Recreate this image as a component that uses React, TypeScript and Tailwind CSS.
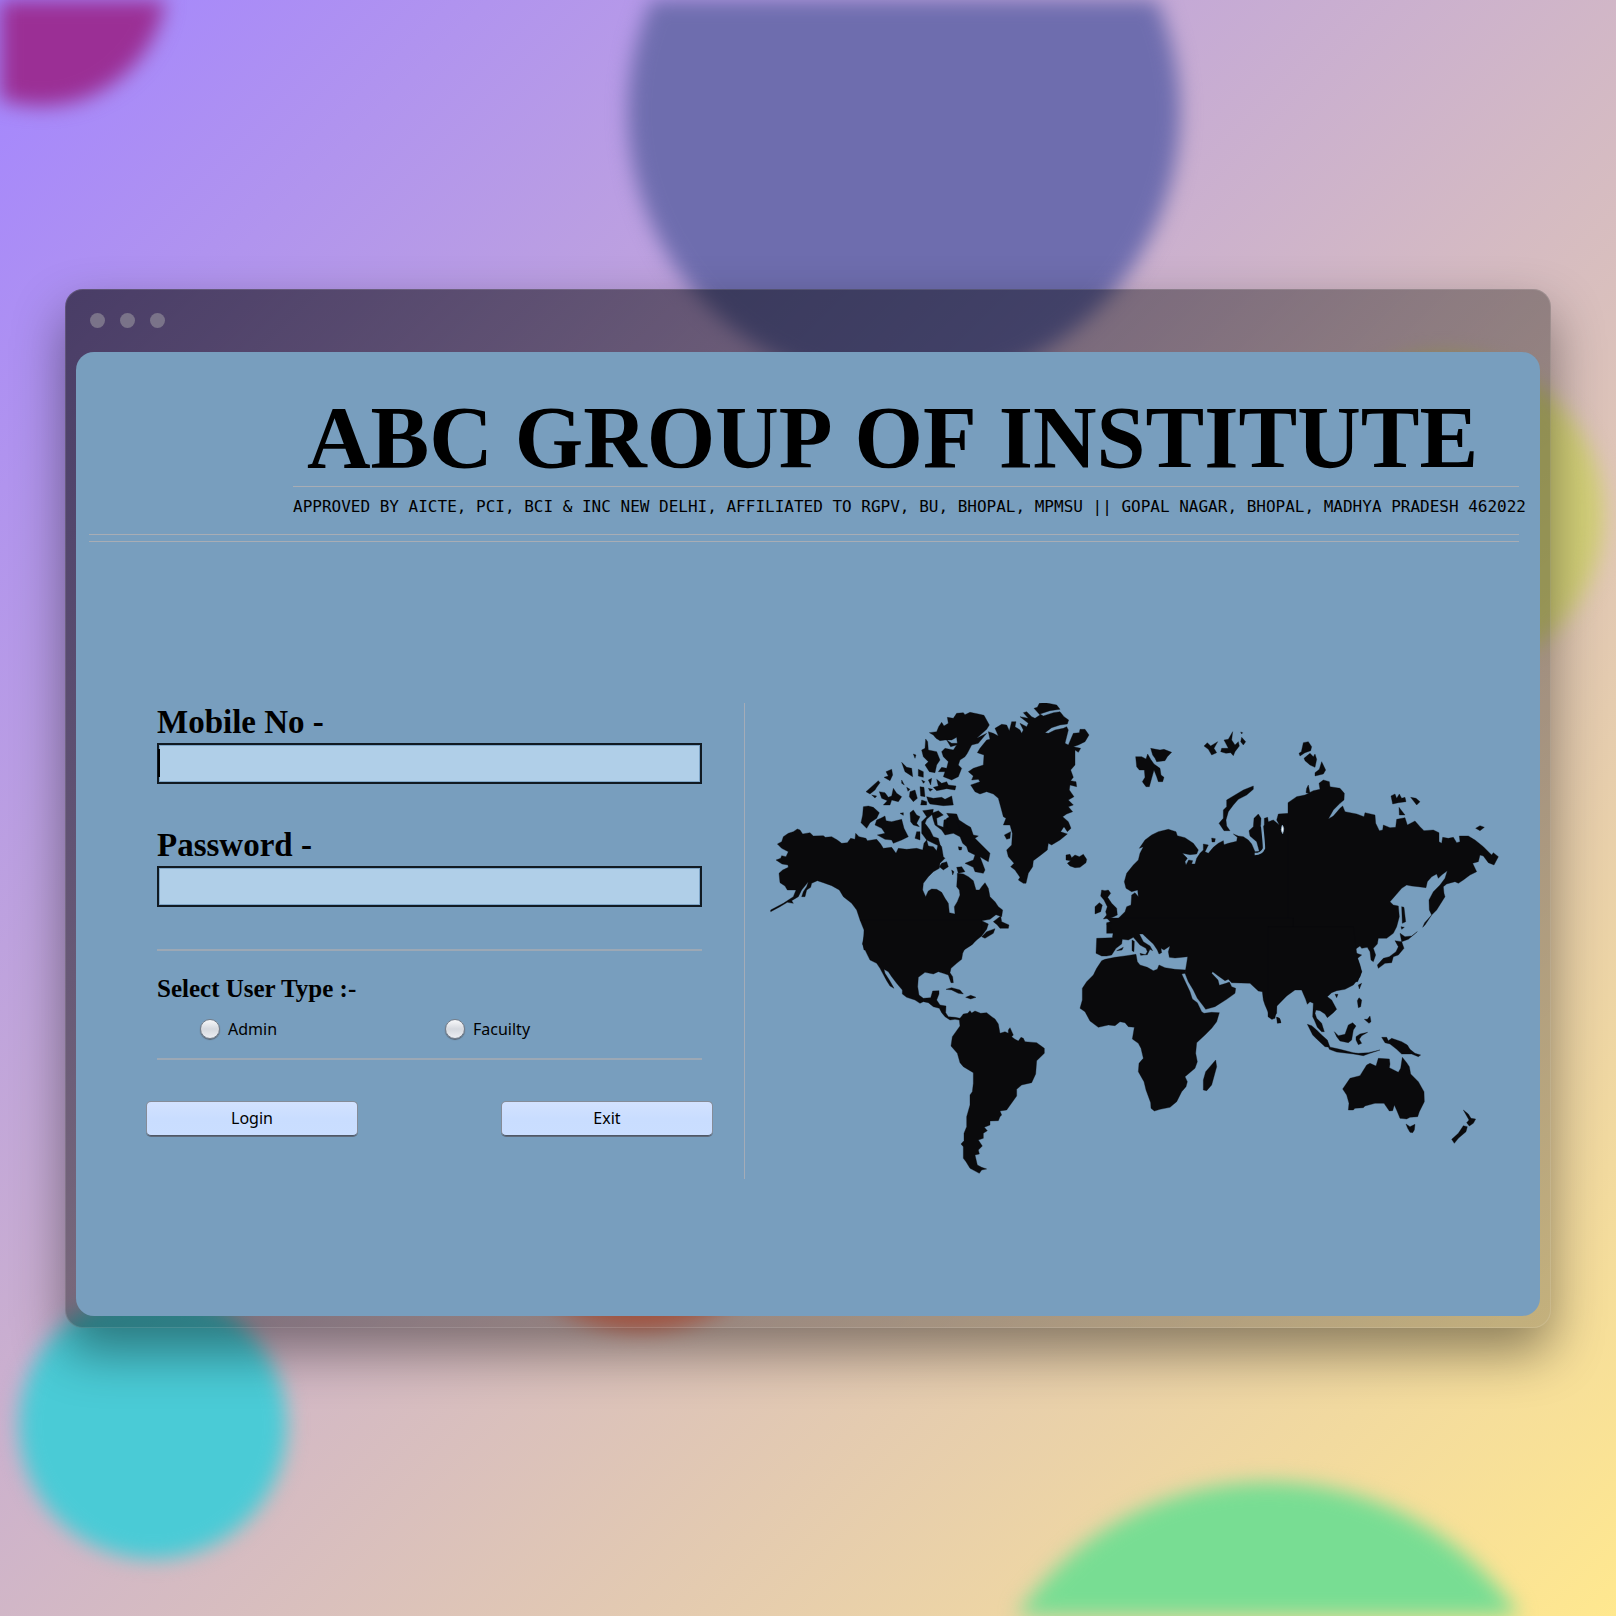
import React from "react";

function Backdrop() {
  return (
    <svg
      aria-hidden="true"
      className="absolute inset-0 h-full w-full blur-[10px]"
      viewBox="0 0 1616 1616"
      preserveAspectRatio="xMidYMid slice"
    >
      <circle cx="41" cy="-20" r="126" fill="#9b2f95" />
      <circle cx="904" cy="112" r="276" fill="#6e6dae" />
      <circle cx="1444" cy="515" r="160" fill="#d3d078" />
      <circle cx="153" cy="1425" r="134" fill="#4acbd6" />
      <circle cx="1268" cy="1785" r="303" fill="#78dd93" />
      <circle cx="641" cy="1168" r="163" fill="#e87a60" />
    </svg>
  );
}

function WorldMap() {
  return (
    <svg
      role="img"
      aria-label="World map"
      className="h-auto w-full"
      viewBox="770 703 740 476"
      fill="#0a0a0c"
      stroke="#0a0a0c"
      strokeWidth="1"
      strokeLinejoin="round"
    >
      {/* North America and the Canadian Arctic */}
      <g transform="translate(760 690) scale(0.33333)">
        <path d="M52,462 65,455 70,440 85,430 100,425 112,417 120,420 128,432 150,428 160,438 190,437 196,442 215,440 232,450 245,460 262,458 272,445 285,448 287,430 297,440 318,445 322,452 350,448 362,462 370,475 395,472 408,490 415,475 440,478 470,475 488,480 492,460 500,450 505,468 520,470 530,482 535,460 545,470 550,500 555,505 540,520 538,535 520,545 505,560 490,580 488,600 497,620 505,603 515,597 530,598 545,607 555,625 565,640 568,668 585,672 583,650 592,635 600,615 598,600 590,590 592,560 592,550 610,552 625,560 640,572 648,600 658,600 665,590 675,578 685,595 690,620 705,635 715,650 728,660 725,680 708,674 690,688 665,692 685,702 680,718 665,738 650,750 635,765 612,780 312,780 310,770 312,720 300,690 290,660 275,640 250,620 238,600 215,587 190,578 172,572 155,580 152,592 140,600 135,620 125,620 130,605 140,590 145,575 125,600 115,620 95,632 100,640 82,637 60,650 32,665 32,660 70,640 100,620 108,600 82,600 75,588 60,578 57,550 68,540 85,532 84,525 66,522 48,510 62,505 65,497 78,500 85,485 65,475Z" />
        <path d="M508,128 530,125 536,110 545,97 552,108 565,100 562,82 580,85 590,70 610,68 615,74 630,67 655,72 672,76 688,105 680,118 650,145 680,130 655,160 635,165 622,190 615,200 600,210 595,225 605,235 595,260 575,270 550,260 555,245 535,245 545,232 560,235 565,215 550,200 545,185 555,175 580,180 590,165 572,170 560,150 575,160 592,160 590,142 575,150 555,150 540,152 528,145 520,135Z" />
        <path d="M497,147 503,155 505,180 530,185 540,210 530,225 525,248 508,245 495,225 505,215 490,200 485,180 495,175Z" />
        <path d="M520,292 535,288 530,268 545,280 560,275 565,285 588,288 585,300 560,296 530,302Z M500,320 520,325 545,322 555,328 575,318 580,345 550,347 510,342 505,335Z" />
        <path d="M515,370 535,362 550,375 530,385 532,405 550,412 552,390 570,385 560,370 590,372 597,390 620,405 632,412 640,435 655,438 645,445 660,460 690,490 685,515 672,508 660,500 675,540 670,550 645,545 640,532 615,520 640,510 645,495 625,485 620,470 608,460 600,440 580,430 555,435 545,420 525,405 520,390Z M560,385 575,378 590,392 600,420 578,425 560,412Z" />
        <path d="M310,350 325,348 340,352 358,368 350,385 330,398 320,415 303,398 308,375Z M350,390 362,385 375,378 378,392 395,395 425,388 432,415 445,440 425,450 400,460 395,450 375,448 352,435 375,430 365,415 345,405Z" />
        <path d="M318,305 355,272 360,278 350,292 345,300 330,312Z M358,305 375,308 385,322 395,318 400,295 410,310 425,320 415,335 395,330 390,345 370,345 382,332 365,325Z M372,262 385,258 378,245 395,238 398,255 390,272Z M425,217 440,232 455,235 458,260 435,245Z M450,305 465,300 472,325 460,335 448,320Z M480,290 492,292 495,320 482,318Z M485,330 500,335 500,345 482,345Z M475,238 490,245 490,262 475,258Z M425,270 433,285 425,280Z M460,192 468,195 465,205Z M485,270 495,275 490,280Z M505,270 515,265 512,285Z M420,370 430,368 430,376Z M335,315 350,318 345,324Z M440,292 450,298 444,304Z M505,295 518,298 510,304Z" />
        <path d="M450,368 460,360 470,375 480,380 470,400 478,410 460,405 452,395Z M488,362 520,358 518,372 500,388 495,400 510,420 520,440 535,445 542,470 520,460 500,450 485,430 485,395 500,380Z M470,425 480,425 480,450 465,445Z M545,520 560,515 565,530 550,540 538,530Z M575,540 582,545 578,555Z M595,470 606,472 604,480 597,480Z M590,532 605,530 615,545 595,550Z" />
        <path d="M700,695 722,678 725,695 747,705 745,715 720,715 712,705Z M665,740 680,725 705,716 700,730 675,745Z" />
      </g>
      {/* Central and South America */}
      <g transform="translate(840 920) scale(0.33333)">
        <path d="M60,0 72,10 75,35 67,72 80,100 90,120 110,130 120,145 128,160 140,182 150,198 162,205 148,180 135,160 132,148 145,155 155,170 170,190 187,210 187,222 200,232 225,240 240,250 250,245 265,248 280,260 298,265 305,278 315,290 330,300 345,298 358,300 360,318 337,350 333,378 352,400 360,428 370,440 400,458 400,490 397,515 390,525 390,555 380,590 380,620 372,640 372,662 363,672 370,680 370,715 378,725 390,745 418,760 425,750 440,747 425,742 412,735 405,705 418,702 415,690 427,678 415,660 430,655 430,640 442,632 433,622 450,615 450,603 475,602 480,590 485,585 480,573 500,570 530,528 530,508 545,495 575,488 587,462 590,422 613,400 613,385 590,368 555,365 550,355 543,352 535,363 525,358 515,350 520,345 510,323 505,330 505,340 495,335 480,340 475,312 465,297 455,290 440,278 422,280 405,273 395,279 390,272 383,280 370,282 360,295 345,292 325,290 317,278 318,258 300,255 290,240 297,222 297,212 278,213 272,233 250,235 237,225 233,200 235,172 255,157 280,162 295,155 310,160 325,165 333,188 340,188 338,170 330,158 333,145 350,130 365,118 368,100 375,85 398,72 405,58 425,42 425,0Z" />
        <path d="M318,208 335,203 360,210 370,222 355,220 335,210Z M377,232 392,226 408,232 392,237Z" />
      </g>
      {/* Greenland, Iceland, Svalbard, British Isles */}
      <g transform="translate(960 690) scale(0.33333)">
        <path d="M238,40 255,38 275,42 290,45 300,58 270,62 240,72 250,78 280,68 300,65 312,80 326,90 322,102 300,105 275,113 255,128 265,130 285,120 310,115 320,110 325,120 315,160 325,165 340,130 358,128 360,118 375,118 387,135 375,155 355,165 340,170 362,175 355,187 345,180 345,225 332,240 340,262 332,272 348,275 350,290 330,285 328,300 342,320 325,330 340,345 325,350 338,365 320,372 308,380 325,395 333,415 322,425 312,410 302,425 322,432 300,450 275,465 265,460 262,480 240,497 220,512 218,530 205,550 198,580 190,580 175,570 180,562 165,540 152,530 162,520 145,500 140,480 155,465 157,430 150,405 130,405 138,385 130,380 122,350 115,325 100,312 80,305 60,312 45,305 32,285 60,275 55,268 35,270 40,258 25,245 40,235 70,225 72,195 52,188 60,175 80,150 90,148 85,125 100,130 115,138 105,115 125,103 140,105 148,122 155,95 168,95 165,110 180,120 185,130 190,120 180,100 200,110 205,100 180,80 205,85 190,68 200,65 215,80 225,85 240,75 222,55 232,52Z" />
        <path d="M133,435 152,425 150,445 140,448Z M318,495 330,493 335,503 345,495 358,500 370,493 380,508 378,518 360,532 345,533 330,528 322,520 332,512 318,510Z" />
        <path d="M527,200 545,200 558,207 563,192 572,208 582,222 600,235 603,255 612,262 608,275 595,275 590,260 582,240 575,265 568,290 558,290 547,275 555,262 553,240 538,240 530,230Z M572,175 588,178 600,180 612,178 635,187 622,200 615,212 590,215 585,205 578,195Z" />
        <path d="M425,600 435,602 445,600 452,610 443,622 455,640 470,655 472,675 455,683 430,687 440,675 437,665 442,650 432,630 422,618Z M405,650 418,638 427,645 422,665 405,672Z" />
      </g>
      {/* Northern Europe and western Siberia */}
      <g transform="translate(1100 710) scale(0.33333)">
        <path d="M73,515 80,490 100,465 115,450 120,430 130,410 118,415 135,390 155,375 175,365 205,358 228,365 232,377 255,383 280,400 295,420 290,432 270,434 247,430 262,445 255,455 258,465 266,450 278,452 275,462 285,462 290,445 300,430 310,420 310,402 325,405 315,425 325,430 340,412 355,400 370,392 372,404 385,400 410,394 412,382 400,372 415,378 430,380 445,390 455,402 465,425 478,424 470,395 450,378 447,362 460,350 462,325 475,312 483,325 482,350 487,352 493,345 493,325 503,322 505,335 520,330 538,345 530,330 535,312 568,310 575,300 570,285 590,262 620,257 640,250 670,240 670,670 20,670 20,638 50,630 75,605 80,590 93,585 95,555 105,548 115,560 113,540 95,545 78,535Z" />
        <path d="M460,228 460,238 440,255 415,268 400,285 385,305 378,330 380,348 390,362 372,362 357,340 370,325 370,300 380,290 380,270 400,258 430,240Z" />
        <path d="M312,108 322,98 332,108 353,95 342,115 350,128 335,135 325,118Z M365,115 385,115 372,90 385,88 398,65 395,90 405,105 415,95 418,108 405,125 400,137 392,128 378,130 362,125Z M425,82 437,95 430,105 422,95Z M422,66 428,68 425,72Z M335,384 346,386 344,396 336,396Z" />
        <path d="M486,345 Q492,400 492,415 Q485,432 464,432" fill="none" stroke="#789ebe" strokeWidth="7" />
        <path d="M547,345 Q555,355 548,371 Q540,360 547,345Z" fill="#ffffff" stroke="#789ebe" strokeWidth="2" />
      </g>
      {/* Eastern Siberia and Japan */}
      <g transform="translate(1290 720) scale(0.33333)">
        <path d="M-6,248 20,230 45,225 70,212 90,208 87,190 100,180 118,185 120,200 150,205 163,220 162,240 150,250 130,270 115,297 130,288 150,265 158,258 165,275 200,282 222,290 225,278 255,285 257,310 268,332 278,330 280,315 300,323 317,322 320,298 345,293 352,315 375,303 390,320 402,332 430,330 447,338 447,365 455,370 458,352 475,355 490,352 500,368 510,365 508,348 535,348 555,360 580,380 598,398 605,405 610,398 625,410 612,435 595,428 580,408 570,405 565,425 548,430 560,455 540,465 520,480 505,490 495,485 470,492 460,500 462,520 465,530 440,570 425,585 418,570 417,540 430,515 450,495 465,475 472,452 455,465 445,475 440,462 425,470 412,485 408,503 385,500 365,498 350,495 335,505 315,528 300,545 310,555 325,558 328,590 320,620 310,640 290,655 265,655 262,672 250,685 257,705 250,725 243,720 240,695 232,682 215,685 210,678 190,692 200,700 215,705 203,715 210,735 215,755 203,785 -6,785Z" />
        <path d="M40,68 55,65 65,80 62,92 45,98 30,108 27,100 34,95Z M42,115 60,100 70,110 75,102 80,118 75,142 60,135 45,122Z M95,125 107,150 100,162 75,168 75,158 88,148Z M50,205 55,195 60,220 48,218Z M303,228 315,222 320,235 328,222 335,235 345,232 348,245 325,248 308,252Z M362,232 378,235 390,245 380,255Z M327,262 335,272 345,285 328,285Z M557,325 570,317 583,322 570,332Z" />
        <path d="M335,560 342,562 347,605 337,610Z M333,620 343,622 335,628Z M330,640 345,650 365,648 382,635 355,658 335,665Z M315,662 335,665 342,685 325,705 310,710 305,728 285,730 265,745 262,735 280,715 298,710 318,695 325,680Z M425,585 405,615 398,622 404,608Z" />
      </g>
      {/* Southern Europe, Africa, Middle East, India */}
      <g transform="translate(1060 920) scale(0.33333)">
        <path d="M140,-6 155,10 140,12 160,35 157,53 135,54 110,55 108,100 125,108 140,108 155,105 168,85 185,72 187,58 205,60 220,52 240,75 258,85 262,95 256,104 240,100 242,106 262,104 270,88 278,92 270,78 250,65 238,42 248,42 258,52 280,72 292,90 297,102 305,98 303,85 312,90 330,78 325,95 328,112 345,114 383,110 380,130 375,160 385,185 400,210 412,235 430,258 437,268 465,260 500,238 525,220 527,205 515,200 508,186 498,190 478,196 474,180 455,160 458,155 475,168 495,182 505,178 515,188 570,190 595,213 607,215 610,240 615,255 628,285 637,298 650,280 650,258 700,205 700,-6Z" />
        <path d="M135,118 165,112 200,107 228,103 232,125 240,135 262,142 280,152 292,148 297,135 315,143 345,148 378,150 375,160 365,162 378,190 390,215 397,237 412,248 425,275 432,280 455,277 478,278 470,305 455,325 435,345 410,368 407,400 412,425 405,445 375,470 382,485 378,500 365,515 350,545 330,562 300,568 283,573 273,565 272,548 258,510 252,485 235,455 237,430 250,415 243,385 235,370 217,357 223,322 205,320 195,308 180,305 165,317 145,315 115,322 90,303 75,275 60,265 67,240 67,205 80,185 100,165 110,145 125,122Z" />
        <path d="M467,420 470,440 455,495 440,512 430,510 430,480 437,455Z M650,292 658,294 663,308 652,310Z M216,60 223,64 222,95 216,92Z M170,92 190,82 186,90Z" />
      </g>
      {/* South-East Asia and Oceania */}
      <g transform="translate(1270 940) scale(0.33333)">
        <path d="M-6,-40 250,-40 262,55 275,95 270,110 250,135 225,148 200,152 185,158 172,170 185,180 200,208 190,218 172,233 165,222 150,212 138,210 135,220 140,235 155,250 163,275 155,275 142,262 133,240 128,230 130,190 120,185 112,193 107,178 95,150 75,150 50,168 20,198 15,235 5,238 -6,230Z" />
        <path d="M325,355 358,357 360,372 358,383 385,397 392,385 397,352 410,368 418,380 422,402 445,425 462,455 463,485 448,515 443,530 420,532 410,537 390,535 382,515 373,495 368,512 358,513 342,490 315,490 285,498 280,503 255,505 250,510 235,510 237,490 230,465 218,447 240,415 270,407 290,375 300,370 318,378Z" />
        <path d="M408,552 420,560 435,553 433,570 428,578 420,577 413,565Z M580,510 595,522 603,535 617,537 610,550 598,558 590,548 597,540Z M580,557 592,560 588,575 565,595 553,610 545,598 565,580Z M335,292 350,292 355,302 365,295 395,305 412,315 420,328 435,340 452,345 445,350 425,342 395,342 380,328 360,312 345,308Z M193,275 205,287 225,283 235,255 248,248 258,258 250,270 245,300 235,308 210,303 200,290Z M258,290 270,282 293,277 275,287 268,298 275,310 265,314 258,300Z M112,253 125,257 140,270 155,285 172,300 180,322 165,320 140,297 128,285Z M175,320 210,328 250,338 265,340 295,338 330,330 300,340 280,347 250,342 200,336 178,328Z M262,182 267,173 275,180 272,200 265,203Z M283,238 292,238 300,228 303,245 297,250Z M265,135 275,130 268,147Z M195,163 204,163 200,173Z M20,232 30,237 32,248 24,248Z" />
      </g>
    </svg>
  );
}

const fieldClass =
  "block h-[41px] w-full border-2 border-[#111a22] bg-[#b0cfe8] px-1 text-lg shadow-[inset_0_0_0_1px_#7fa6c8] outline-none";
const labelClass = "block text-[33px] leading-[38px] font-bold";
const buttonClass =
  "h-[35px] w-[212px] rounded-[5px] border border-[#858c98] border-b-[#4f5867] bg-linear-to-b from-[#d3e2ff] via-[#c9ddff] to-[#cadeff] font-['Noto_Sans',sans-serif] text-base leading-none shadow-[0_1px_0_#5f6a7a]";
const radioClass =
  "h-5 w-5 appearance-none rounded-full border border-[#747c88] bg-linear-to-b from-[#f8f8fa] via-[#d6d9df] to-[#eceef2] shadow-[0_1px_1px_#5a6470] checked:bg-[#334155]";

function LoginForm() {
  return (
    <form className="pb-[43px]" onSubmit={(e) => e.preventDefault()}>
      <div className="px-[11px] font-['Liberation_Serif',serif]">
        <label htmlFor="mobile" className={labelClass}>
          Mobile No -
        </label>
        <div className="relative mt-[2px]">
          <input id="mobile" type="text" className={fieldClass} />
          <span className="pointer-events-none absolute top-[6px] left-px h-7 w-[2px] bg-black" />
        </div>
        <label htmlFor="password" className={`mt-[42px] ${labelClass}`}>
          Password -
        </label>
        <div className="mt-[2px]">
          <input id="password" type="password" className={fieldClass} />
        </div>
        <hr className="mt-[42px] border-t-2 border-[#9ca8b5]" />
        <fieldset className="mt-6">
          <legend className="block text-[25px] leading-[28px] font-bold">Select User Type :-</legend>
          <div className="mt-[14px] flex pl-[43px] font-['Noto_Sans',sans-serif] text-base leading-6">
            <label className="flex w-[245px] items-center gap-2">
              <input type="radio" name="userType" className={radioClass} />
              Admin
            </label>
            <label className="flex items-center gap-2">
              <input type="radio" name="userType" className={radioClass} />
              Facuilty
            </label>
          </div>
        </fieldset>
        <hr className="mt-[17px] border-t-2 border-[#9ca8b5]" />
      </div>
      <div className="mt-[41px] flex justify-between">
        <button type="submit" className={buttonClass}>
          Login
        </button>
        <button type="button" className={buttonClass}>
          Exit
        </button>
      </div>
    </form>
  );
}

export default function App() {
  return (
    <div className="relative flex min-h-screen items-center overflow-hidden bg-[linear-gradient(135deg,#a385ff_0%,#ffe88f_100%)] px-[65px] text-black">
      <Backdrop />
      <div className="relative w-full rounded-[18px] bg-[linear-gradient(135deg,rgba(0,0,0,0.58),rgba(0,0,0,0.34)_55%,rgba(0,0,0,0.2))] px-[11px] pb-3 shadow-[0_24px_52px_rgba(0,0,0,0.42),inset_0_0_0_1px_rgba(255,255,255,0.12)]">
        <div className="flex h-[63px] items-center gap-[15px] pl-[14px]">
          <span className="h-[15px] w-[15px] rounded-full bg-[#7a7389]" />
          <span className="h-[15px] w-[15px] rounded-full bg-[#7a7389]" />
          <span className="h-[15px] w-[15px] rounded-full bg-[#7a7389]" />
        </div>
        <main className="rounded-[18px] bg-[#789ebe] pt-[42px] pr-[21px] pb-[137px] pl-[13px]">
          <header>
            <div className="ml-[204px]">
              <h1 className="pl-[14px] font-['Liberation_Serif',serif] text-[88px] leading-none font-bold whitespace-nowrap [font-kerning:none]">
                ABC GROUP OF INSTITUTE
              </h1>
              <hr className="mt-1 border-[#a8adb5]" />
              <p className="mt-2 font-['DejaVu_Sans_Mono',monospace] text-[16px] leading-6 whitespace-nowrap">
                APPROVED BY AICTE, PCI, BCI &amp; INC NEW DELHI, AFFILIATED TO RGPV, BU, BHOPAL, MPMSU || GOPAL NAGAR,
                BHOPAL, MADHYA PRADESH 462022
              </p>
            </div>
            <hr className="mt-[15px] border-[#a8adb5]" />
            <hr className="mt-[6px] border-[#a8adb5]" />
          </header>
          <div className="mt-[161px] grid grid-cols-[656fr_774fr]">
            <section className="border-r border-[#a4acb8] pr-[31px] pl-[57px]">
              <LoginForm />
            </section>
            <section className="pr-[9px] pl-[25px]">
              <WorldMap />
            </section>
          </div>
        </main>
      </div>
    </div>
  );
}
